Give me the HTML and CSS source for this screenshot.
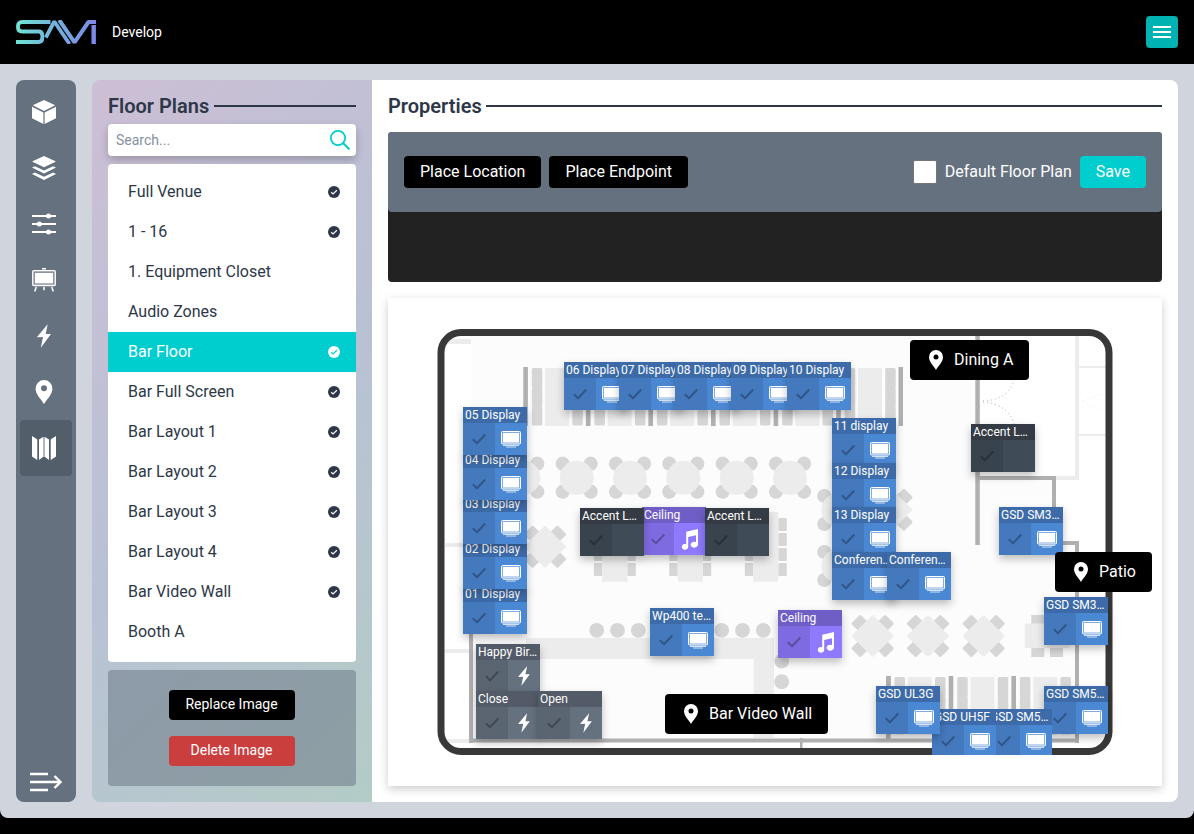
FILE: index.html
```html
<!DOCTYPE html>
<html lang="en">
<head>
<meta charset="utf-8">
<title>Develop</title>
<link rel="stylesheet" href="styles.css">
</head>
<body>
<svg class="defs" width="0" height="0" aria-hidden="true">
  <defs>
    <symbol id="check" viewBox="0 0 32 32"><path d="M9.8 16.3 14 20.2 22.3 11.6" fill="none" stroke="currentColor" stroke-width="2.1"/></symbol>
    <symbol id="tv" viewBox="0 0 32 32">
      <rect x="6.5" y="8.5" width="19" height="12.500" rx="1" fill="#fff" fill-opacity=".3" stroke="#fff"/>
      <rect x="8" y="10" width="16" height="9.500" fill="#fff"/>
      <path d="M8 22.5H24M11 24H21" stroke="#fff" stroke-opacity=".75"/>
    </symbol>
    <symbol id="bolt" viewBox="0 0 24 24"><path d="M15.7.3 4.8 13.2 11 13 8.8 23.7 19 10H13.7Z" fill="currentColor"/></symbol>
    <symbol id="music" viewBox="0 0 32 32"><path d="M12.2 8.7 24 6V21.5A3.7 3 0 1 1 22 19V12.2L14.2 14V24A3.2 2.8 0 1 1 12.2 21.3Z" fill="currentColor"/></symbol>
    <symbol id="pin" viewBox="0 0 24 24"><path fill="currentColor" fill-rule="evenodd" d="M12 0A8.4 8.4 0 0 0 3.6 8.4C3.6 14.5 9.5 19.5 12 24 14.5 19.5 20.4 14.5 20.4 8.4A8.4 8.4 0 0 0 12 0ZM12 5.3A3 3 0 1 1 12 11.300A3 3 0 0 1 12 5.3Z"/></symbol>
    <symbol id="done" viewBox="0 0 12 12"><circle cx="6" cy="6" r="6" fill="currentColor"/><path class="tick" d="M3.2 6.3 5 8 8.900 4.200" fill="none" stroke-width="1.2"/></symbol>

    <g id="booth">
      <rect x="0" y="0" width="4.600" height="59" fill="#b0b0b0"/>
      <g fill="#d6d6d6">
        <rect x="8.500" y="1" width="10.500" height="19.500" rx="1.500"/><rect x="8.500" y="20" width="10.500" height="19.500" rx="1.500"/><rect x="8.500" y="39" width="10.500" height="19.500" rx="1.500"/>
        <rect x="49" y="1" width="10.500" height="19.500" rx="1.500"/><rect x="49" y="20" width="10.500" height="19.500" rx="1.500"/><rect x="49" y="39" width="10.500" height="19.500" rx="1.500"/>
      </g>
      <rect x="21.800" y="1" width="24" height="58" rx="1" fill="#ececec"/>
    </g>
    <g id="round">
      <g fill="#d6d6d6"><circle cx="-14" cy="-14" r="7.100"/><circle cx="14" cy="-14" r="7.100"/><circle cx="-14" cy="14" r="7.100"/><circle cx="14" cy="14" r="7.100"/></g>
      <circle r="17" fill="#ececec"/>
    </g>
    <g id="diamond" transform="rotate(45)">
      <g fill="#d6d6d6"><rect x="-6.500" y="-24" width="13" height="13" rx="1.500"/><rect x="-6.500" y="11" width="13" height="13" rx="1.500"/><rect x="-24" y="-6.500" width="13" height="13" rx="1.500"/><rect x="11" y="-6.500" width="13" height="13" rx="1.500"/></g>
      <rect x="-15" y="-15" width="30" height="30" rx="1" fill="#ececec"/>
    </g>
    <g id="long">
      <g fill="#d6d6d6">
        <rect x="-8.500" y="6" width="8.500" height="13" rx="1"/><rect x="-8.500" y="21" width="8.500" height="13" rx="1"/><rect x="-8.500" y="36" width="8.500" height="13" rx="1"/><rect x="-8.500" y="51" width="8.500" height="13" rx="1"/>
        <rect x="25" y="6" width="8.500" height="13" rx="1"/><rect x="25" y="21" width="8.500" height="13" rx="1"/><rect x="25" y="36" width="8.500" height="13" rx="1"/><rect x="25" y="51" width="8.500" height="13" rx="1"/>
      </g>
      <rect width="25" height="69.700" fill="#ececec"/>
    </g>
  </defs>
</svg>

<header class="topbar">
  <svg class="logo" viewBox="0 0 80 24" width="80" height="24" aria-label="SAVI">
    <defs><linearGradient id="brand" gradientUnits="userSpaceOnUse" x1="0" y1="0" x2="80" y2="10"><stop offset="0" stop-color="#6fe6d2"/><stop offset=".5" stop-color="#74b0dc"/><stop offset="1" stop-color="#7d88ea"/></linearGradient></defs>
    <g fill="none" stroke="url(#brand)">
      <path d="M34.500 2H6Q2 2 2 6V7.500Q2 11.500 6 11.500H22.500Q26.300 11.500 26.300 15.500V18Q26.300 22 22.500 22H0" stroke-width="3.800"/>
      <path d="M29.800 17.500 38.300 1.500 53.500 24" stroke-width="3.800" stroke-linejoin="bevel"/>
      <path d="M43.200 0 58.500 22.300 72.500 2H80" stroke-width="4" stroke-linejoin="bevel"/>
      <path d="M77.700 5V24" stroke-width="4.400"/>
    </g>
  </svg>
  <span class="mode">Develop</span>
  <button class="menu" aria-label="Menu"><i></i><i></i><i></i></button>
</header>

<main class="shell">
  <nav class="rail">
    <a class="rail-item"><svg viewBox="0 0 24 24"><path fill="#fff" d="M12 0 23.200 5.300 12 11 .8 5.300ZM0 6.800 11.400 12.500V24L0 18.300ZM24 6.800 12.600 12.500V24L24 18.300Z"/></svg></a>
    <a class="rail-item"><svg viewBox="0 0 24 24"><path fill="#fff" d="M12 0 24 5.500 12 11.300 0 5.500ZM2.800 10.200 12 14.500 21.200 10.200 24 11.600 12 17.500 0 11.600ZM2.800 16.400 12 20.700 21.200 16.400 24 17.900 12 24 0 17.900Z"/></svg></a>
    <a class="rail-item"><svg viewBox="0 0 24 24"><path d="M0 4H24M0 12H24M0 20H24" stroke="#fff" stroke-width="2"/><g fill="#fff"><circle cx="16.500" cy="4" r="2.500"/><circle cx="7.300" cy="12" r="2.500"/><circle cx="16.500" cy="20" r="2.500"/></g></svg></a>
    <a class="rail-item"><svg viewBox="0 0 24 24"><rect x=".7" y="2.700" width="22.600" height="14.800" rx="1" fill="#fff" fill-opacity=".25" stroke="#fff" stroke-width="1.300"/><rect x="3" y="5" width="18" height="10.300" fill="#fff"/><path d="M4.300 19 2.700 23.500M12 19V22.300M19.700 19 21.300 23.500M10 .7H14" stroke="#fff" stroke-width="1.500"/></svg></a>
    <a class="rail-item"><svg viewBox="0 0 24 24"><use href="#bolt"/></svg></a>
    <a class="rail-item"><svg viewBox="0 0 24 24"><use href="#pin"/></svg></a>
    <a class="rail-item active"><svg viewBox="0 0 24 24"><path fill="#fff" d="M0 0 5.300 3.500V24L0 20.500ZM24 0 18.700 3.500V24L24 20.500ZM7 3.500 11 1V21L7 24ZM17 3.500 13 1V21L17 24Z"/><path fill="#fff" fill-opacity=".55" d="M11 1h2v20h-2z"/></svg></a>
    <a class="rail-toggle"><svg viewBox="0 0 32 24" width="32" height="24"><path d="M0 4H18M0 12H29M0 20H18M24.500 6 30.500 12 24.500 18" fill="none" stroke="#fff" stroke-width="2.400"/></svg></a>
  </nav>

  <section class="plans">
    <h2 class="heading">Floor Plans</h2>
    <label class="search"><input type="text" placeholder="Search..."><svg viewBox="0 0 20 20" width="20" height="20"><circle cx="8" cy="8" r="7.100" fill="none" stroke="#00cdcd" stroke-width="1.800"/><path d="M13 13 19.400 19.400" stroke="#00cdcd" stroke-width="2"/></svg></label>
    <ul class="list">
      <li>Full Venue<svg><use href="#done"/></svg></li>
      <li>1 - 16<svg><use href="#done"/></svg></li>
      <li>1. Equipment Closet</li>
      <li>Audio Zones</li>
      <li class="selected">Bar Floor<svg><use href="#done"/></svg></li>
      <li>Bar Full Screen<svg><use href="#done"/></svg></li>
      <li>Bar Layout 1<svg><use href="#done"/></svg></li>
      <li>Bar Layout 2<svg><use href="#done"/></svg></li>
      <li>Bar Layout 3<svg><use href="#done"/></svg></li>
      <li>Bar Layout 4<svg><use href="#done"/></svg></li>
      <li>Bar Video Wall<svg><use href="#done"/></svg></li>
      <li>Booth A</li>
    </ul>
    <div class="image-actions">
      <button class="btn small">Replace Image</button>
      <button class="btn small danger">Delete Image</button>
    </div>
  </section>

  <section class="properties">
    <h2 class="heading">Properties</h2>
    <div class="tray">
      <div class="toolbar">
        <button class="btn">Place Location</button>
        <button class="btn">Place Endpoint</button>
        <label class="default"><span class="box"></span>Default Floor Plan</label>
        <button class="btn save">Save</button>
      </div>
    </div>

    <div class="canvas">
      <svg class="plan" viewBox="388 298 774 488" width="774" height="488">
        <rect x="441" y="332.500" width="668" height="419" rx="20" fill="#fff"/>
        <path d="M471 336H975V478H1054V543H1077V739H471Z" fill="#fcfcfc"/>
        <g fill="#ececec">
          <path d="M445 339h26v5h-26zM445 543h26v4h-26zM445 649h26v4h-26zM445 739h26v4h-26zM1075 336h4v144h-23v-4h19zM1079 366h27v2h-27zM1079 434h27v2h-27z"/>
          <path d="M526 638H774V738H753.700V659H526Z"/>
        </g>
        <path d="M803 739h32v2h-32z" fill="#ddd"/>
        <g fill="none" stroke="#aaa" stroke-dasharray="1 3"><path d="M983 401Q1008 400 1014 380"/><path d="M983 402Q1008 404 1014 424"/></g>
        <g fill="none" stroke="#eee" stroke-dasharray="1 3"><path d="M1083 401 1105 393M1083 402 1105 411"/></g>

        <use href="#booth" x="523.300" y="367"/><use href="#booth" x="585.900" y="367"/><use href="#booth" x="648.400" y="367"/><use href="#booth" x="711" y="367"/><use href="#booth" x="773.600" y="367"/><use href="#booth" x="836.200" y="367"/>
        <path d="M898.500 367h4.500v59h-4.500z" fill="#b0b0b0"/>
        <use href="#round" x="523.300" y="477.700"/><use href="#round" x="576.700" y="477.700"/><use href="#round" x="630" y="477.700"/><use href="#round" x="683.300" y="477.700"/><use href="#round" x="736.700" y="477.700"/><use href="#round" x="790" y="477.700"/>
        <use href="#round" x="838.300" y="510"/><use href="#round" x="838.300" y="566"/>
        <use href="#diamond" transform="translate(545 546.700)"/><use href="#diamond" transform="translate(891.500 509.700)"/>
        <use href="#diamond" transform="translate(872.700 636)"/><use href="#diamond" transform="translate(928 636)"/><use href="#diamond" transform="translate(983.700 636)"/>
        <use href="#long" x="602.300" y="512"/><use href="#long" x="677.700" y="512"/><use href="#long" x="753.300" y="512"/>
        <g fill="#d6d6d6">
          <circle cx="596.700" cy="630.300" r="7.400"/><circle cx="617.500" cy="630.300" r="7.400"/><circle cx="638.300" cy="630.300" r="7.400"/>
          <circle cx="721.700" cy="630.300" r="7.400"/><circle cx="742.500" cy="630.300" r="7.400"/><circle cx="763.300" cy="630.300" r="7.400"/>
          <circle cx="781.700" cy="661" r="7.400"/><circle cx="781.700" cy="681.700" r="7.400"/>
          <path d="M1031.300 615h13v42h-13zM1050 615h13v42h-13z"/>
        </g>
        <path d="M1024.700 623.500h45v24.500h-45z" fill="#ececec"/>
        <use href="#booth" x="886" y="676"/><use href="#booth" x="948.700" y="676"/><use href="#booth" x="1011.400" y="676"/>
        <g fill="#b0b0b0">
          <path d="M469 600h4v143h-4zM469 738.500H1079V742.500H469zM975.300 336h4.500v209h-4.500zM975.300 476H1056V480H975.300zM1052 476h4v67h-4zM1052 541h27v4h-27zM1075 541h4v202h-4zM886 676h4.600v64h-4.600zM800 738h2.500v11h-2.500z"/>
        </g>
        <rect x="441" y="332.500" width="668" height="419" rx="20" fill="none" stroke="#383838" stroke-width="7"/>
      </svg>

      <div class="tile blue" style="--x:75;--y:288"><b>01 Display</b><svg><use href="#check"/></svg><svg><use href="#tv"/></svg></div>
      <div class="tile blue" style="--x:75;--y:243"><b>02 Display</b><svg><use href="#check"/></svg><svg><use href="#tv"/></svg></div>
      <div class="tile blue" style="--x:75;--y:198"><b>03 Display</b><svg><use href="#check"/></svg><svg><use href="#tv"/></svg></div>
      <div class="tile blue" style="--x:75;--y:154"><b>04 Display</b><svg><use href="#check"/></svg><svg><use href="#tv"/></svg></div>
      <div class="tile blue" style="--x:75;--y:109"><b>05 Display</b><svg><use href="#check"/></svg><svg><use href="#tv"/></svg></div>
      <div class="tile blue" style="--x:176;--y:64"><b>06 Display</b><svg><use href="#check"/></svg><svg><use href="#tv"/></svg></div>
      <div class="tile blue" style="--x:231;--y:64"><b>07 Display</b><svg><use href="#check"/></svg><svg><use href="#tv"/></svg></div>
      <div class="tile blue" style="--x:287;--y:64"><b>08 Display</b><svg><use href="#check"/></svg><svg><use href="#tv"/></svg></div>
      <div class="tile blue" style="--x:343;--y:64"><b>09 Display</b><svg><use href="#check"/></svg><svg><use href="#tv"/></svg></div>
      <div class="tile blue" style="--x:399;--y:64"><b>10 Display</b><svg><use href="#check"/></svg><svg><use href="#tv"/></svg></div>
      <div class="tile blue" style="--x:444;--y:120"><b>11 display</b><svg><use href="#check"/></svg><svg><use href="#tv"/></svg></div>
      <div class="tile blue" style="--x:444;--y:165"><b>12 Display</b><svg><use href="#check"/></svg><svg><use href="#tv"/></svg></div>
      <div class="tile blue" style="--x:444;--y:209"><b>13 Display</b><svg><use href="#check"/></svg><svg><use href="#tv"/></svg></div>
      <div class="tile blue" style="--x:444;--y:254"><b>Conferen…</b><svg><use href="#check"/></svg><svg><use href="#tv"/></svg></div>
      <div class="tile blue" style="--x:499;--y:254"><b>Conferen…</b><svg><use href="#check"/></svg><svg><use href="#tv"/></svg></div>
      <div class="tile purple" style="--x:254;--y:209"><b>Ceiling</b><svg><use href="#check"/></svg><svg><use href="#music"/></svg></div>
      <div class="tile dark" style="--x:192;--y:210"><b>Accent L…</b><svg><use href="#check"/></svg><svg></svg></div>
      <div class="tile dark" style="--x:317;--y:210"><b>Accent L…</b><svg><use href="#check"/></svg><svg></svg></div>
      <div class="tile dark" style="--x:583;--y:126"><b>Accent L…</b><svg><use href="#check"/></svg><svg></svg></div>
      <div class="tile blue" style="--x:611;--y:209"><b>GSD SM3…</b><svg><use href="#check"/></svg><svg><use href="#tv"/></svg></div>
      <div class="tile blue" style="--x:262;--y:310"><b>Wp400 te…</b><svg><use href="#check"/></svg><svg><use href="#tv"/></svg></div>
      <div class="tile purple" style="--x:390;--y:312"><b>Ceiling</b><svg><use href="#check"/></svg><svg><use href="#music"/></svg></div>
      <div class="tile gray" style="--x:88;--y:346"><b>Happy Bir…</b><svg><use href="#check"/></svg><svg class="boxed"><use href="#bolt"/></svg></div>
      <div class="tile gray" style="--x:88;--y:393"><b>Close</b><svg><use href="#check"/></svg><svg class="boxed"><use href="#bolt"/></svg></div>
      <div class="tile gray" style="--x:150;--y:393"><b>Open</b><svg><use href="#check"/></svg><svg class="boxed"><use href="#bolt"/></svg></div>
      <div class="tile blue" style="--x:656;--y:299"><b>GSD SM3…</b><svg><use href="#check"/></svg><svg><use href="#tv"/></svg></div>
      <div class="tile blue" style="--x:656;--y:388"><b>GSD SM5…</b><svg><use href="#check"/></svg><svg><use href="#tv"/></svg></div>
      <div class="tile blue cut" style="--x:600;--y:411"><b>GSD SM5…</b><svg><use href="#check"/></svg><svg><use href="#tv"/></svg></div>
      <div class="tile blue cut" style="--x:544;--y:411"><b>GSD UH5F</b><svg><use href="#check"/></svg><svg><use href="#tv"/></svg></div>
      <div class="tile blue" style="--x:488;--y:388"><b>GSD UL3G</b><svg><use href="#check"/></svg><svg><use href="#tv"/></svg></div>

      <div class="place" style="--x:522;--y:42"><svg><use href="#pin"/></svg>Dining A</div>
      <div class="place" style="--x:667;--y:254"><svg><use href="#pin"/></svg>Patio</div>
      <div class="place" style="--x:277;--y:396"><svg><use href="#pin"/></svg>Bar Video Wall</div>
    </div>
  </section>
</main>
</body>
</html>
```
FILE: styles.css
```css
* { box-sizing: border-box; }
html, body { height: 100%; }
body {
  margin: 0;
  background: #000;
  color: #2d3748;
  font: 400 16px/24px Roboto, "Liberation Sans", sans-serif;
  display: flex;
  flex-direction: column;
  overflow: hidden;
}
button, input { font: inherit; border: 0; }
svg { display: block; }
.defs { position: absolute; }

.topbar {
  height: 64px;
  flex: none;
  display: flex;
  align-items: center;
  padding: 0 16px;
  gap: 16px;
}
.mode { color: #fff; font-size: 14px; }
.menu {
  margin-left: auto;
  width: 32px;
  height: 32px;
  padding: 0;
  border-radius: 4px;
  background: #00b3b3;
  display: flex;
  flex-direction: column;
  align-items: center;
  justify-content: center;
  gap: 3px;
}
.menu i { width: 18px; height: 2px; background: #fff; }

.shell {
  flex: none;
  height: 754px;
  padding: 16px;
  display: flex;
  background: #d0d4dd;
  border-radius: 0 0 8px 8px;
}

.rail {
  width: 60px;
  margin-right: 16px;
  padding: 4px 4px 0;
  border-radius: 8px;
  background: #66717f;
  color: #fff;
  display: flex;
  flex-direction: column;
}
.rail-item {
  height: 56px;
  padding-right: 4px;
  display: grid;
  place-items: center;
  border-radius: 4px;
}
.rail-item svg { width: 24px; height: 24px; }
.rail-item.active { background: #535e6b; }
.rail-toggle { margin: auto 0 8px 10px; }

.plans {
  width: 280px;
  padding: 16px;
  border-radius: 8px 0 0 8px;
  background: linear-gradient(135deg, #cdbfd5, #b9c1d5 50%, #b3ccc6);
  display: flex;
  flex-direction: column;
  gap: 8px;
}
.heading {
  margin: 0;
  display: flex;
  align-items: center;
  gap: 5px;
  height: 20px;
  font-size: 20px;
  line-height: 20px;
  font-weight: 600;
  color: #2d3748;
}
.heading::after { content: ""; flex: 1; height: 2px; background: #2d3748; }
.properties .heading { gap: 4px; }

.search {
  height: 32px;
  border-radius: 4px;
  background: #fff;
  box-shadow: 0 4px 8px rgba(0, 0, 0, .22);
  display: flex;
  align-items: center;
  padding: 0 6px 0 8px;
}
.search input { flex: 1; min-width: 0; padding: 0; font-size: 14px; background: none; }
.search input::placeholder { color: #8490a2; opacity: 1; }

.list {
  list-style: none;
  margin: 0;
  padding: 8px 0;
  height: 498px;
  border-radius: 4px;
  background: #fff;
  overflow: hidden;
}
.list li {
  height: 40px;
  padding: 0 16px 0 20px;
  display: flex;
  align-items: center;
  justify-content: space-between;
  color: #2d3748;
}
.list li svg { width: 12px; height: 12px; }
.tick { stroke: var(--tick, #fff); }
.list li.selected { --tick: #00cdcd; background: #00cdcd; color: #fff; }

.image-actions {
  height: 116px;
  border-radius: 4px;
  background: rgba(102, 113, 127, .5);
  display: flex;
  flex-direction: column;
  align-items: center;
  justify-content: center;
  gap: 16px;
}
.btn {
  height: 32px;
  padding: 0 16px 1px;
  border-radius: 4px;
  background: #000;
  color: #fff;
  white-space: nowrap;
}
.btn.small { width: 126px; height: 30px; font-size: 14px; padding: 0 1px 2px 0; line-height: 20px; }
.btn.danger { background: #ca3e3e; }
.btn.save { background: #00cdcd; }

.properties {
  flex: 1;
  min-width: 0;
  padding: 16px;
  border-radius: 0 8px 8px 0;
  background: #fff;
}
.tray { margin-top: 16px; height: 150px; border-radius: 4px; background: #222; }
.toolbar {
  height: 80px;
  padding: 0 16px;
  border-radius: 4px;
  background: #66717f;
  display: flex;
  align-items: center;
  gap: 8px;
}
.default { margin-left: auto; color: #fff; display: flex; align-items: center; gap: 8px; }
.box { width: 24px; height: 24px; background: #fff; border: 1px solid #767676; border-radius: 2px; }

.canvas {
  position: relative;
  margin-top: 16px;
  width: 774px;
  height: 488px;
  background: #fff;
  box-shadow: 0 3px 9px rgba(0, 0, 0, .2);
}
.tile, .place {
  position: absolute;
  left: calc(var(--x) * 1px);
  top: calc(var(--y) * 1px);
}
.tile {
  width: 64px;
  height: 48px;
  display: grid;
  grid-template: 16px 32px / 32px 32px;
  background: var(--right);
  color: #fff;
  box-shadow: 0 4px 8px rgba(0, 0, 0, .25);
}
.tile.cut { height: 46px; overflow: hidden; box-shadow: none; }
.tile b {
  grid-column: 1 / 3;
  padding-left: 2px;
  background: var(--head);
  font-size: 12px;
  line-height: 16px;
  font-weight: 400;
  white-space: nowrap;
}
.tile svg { width: 32px; height: 32px; }
.tile b + svg { background: var(--left); color: rgba(0, 0, 0, .28); }
.tile svg.boxed { padding: 6px; }
.blue { --head: #3d6ba9; --left: #4479be; --right: #4b88d4; }
.dark { --head: #343b45; --left: #39434e; --right: #404b58; }
.gray { --head: #525b67; --left: #5b6572; --right: #66717f; }
.purple { --head: #705ec7; --left: #7f6be1; --right: #8f79ff; }

.place {
  height: 40px;
  padding: 0 16px 1px;
  display: flex;
  align-items: center;
  gap: 8px;
  border-radius: 4px;
  background: #000;
  color: #fff;
  white-space: nowrap;
}
.place svg { width: 20px; height: 20px; }
```
